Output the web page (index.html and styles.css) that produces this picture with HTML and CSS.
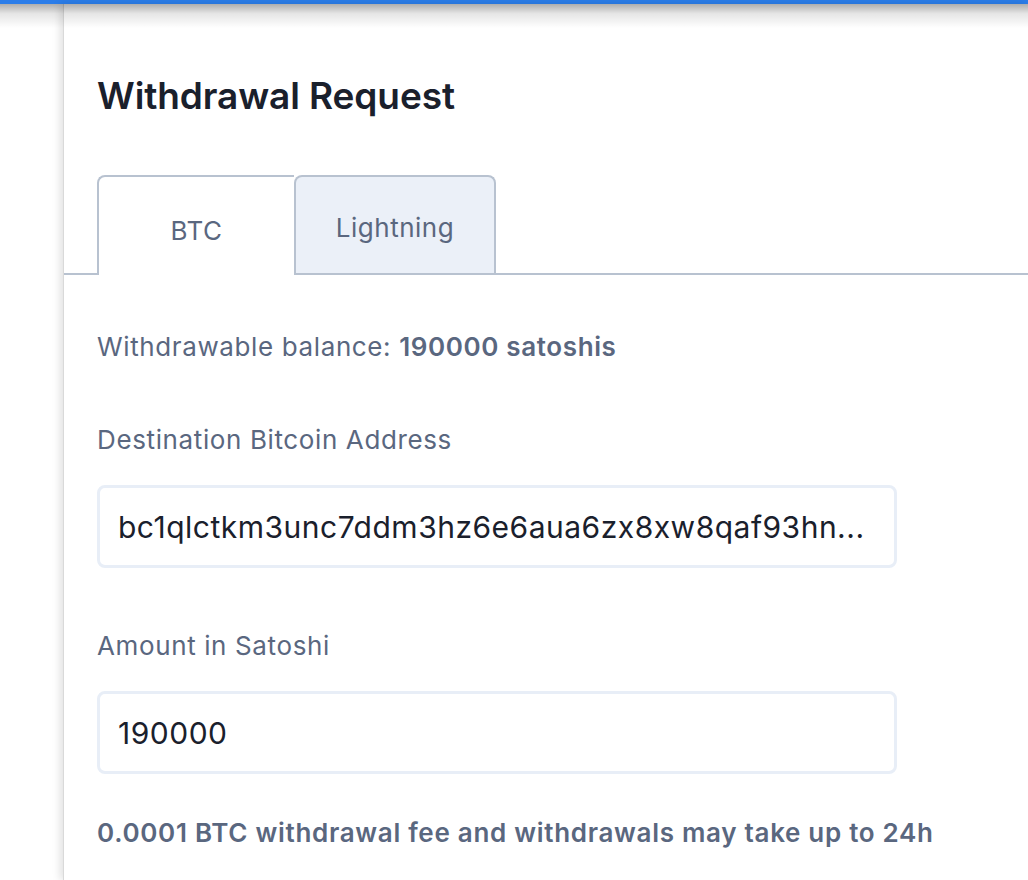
FILE: index.html
```html
<!DOCTYPE html>
<html lang="en">
<head>
<meta charset="utf-8">
<title>Withdrawal Request</title>
<link rel="stylesheet" href="styles.css">
</head>
<body>
<div class="topbar"></div>
<div class="top-shadow"></div>
<div class="layout">
  <aside class="sidebar"></aside>
  <main class="main">
    <h1 class="title">Withdrawal Request</h1>
    <div class="tabs">
      <div class="tab tab-active">BTC</div>
      <div class="tab tab-inactive">Lightning</div>
    </div>
    <div class="panel">
      <p class="balance">Withdrawable balance: <strong>190000 satoshis</strong></p>
      <div class="group">
        <label class="label">Destination Bitcoin Address</label>
        <div class="field">bc1qlctkm3unc7ddm3hz6e6aua6zx8xw8qaf93hn...</div>
      </div>
      <div class="group">
        <label class="label">Amount in Satoshi</label>
        <div class="field">190000</div>
      </div>
      <p class="note">0.0001 BTC withdrawal fee and withdrawals may take up to 24h</p>
    </div>
  </main>
</div>
</body>
</html>
```
FILE: styles.css
```css
* { box-sizing: border-box; }
html, body { margin: 0; padding: 0; background: #ffffff; }
body {
  font-family: Inter, "Noto Sans", Roboto, sans-serif;
  color: #5a677f;
  height: 880px;
  overflow: hidden;
  position: relative;
}
.topbar {
  height: 4px;
  background: #2b7de9;
}
.top-shadow {
  position: absolute;
  left: 0;
  right: 0;
  top: 4px;
  height: 24px;
  background: linear-gradient(to bottom, rgba(0,0,0,0.32), rgba(0,0,0,0.1) 40%, rgba(0,0,0,0));
  z-index: 5;
  pointer-events: none;
}
.layout {
  display: flex;
  height: 876px;
}
.sidebar {
  width: 63px;
  flex: none;
  background: #ffffff;
}
.main {
  flex: 1;
  border-left: 1px solid #d9d9d9;
  box-shadow: -3px 0 8px rgba(0,0,0,0.12);
  background: #ffffff;
  padding-top: 69px;
}
.title {
  margin: 0 0 56px 33px;
  font-size: 37px;
  line-height: 46px;
  font-weight: 600;
  color: #1a202c;
  letter-spacing: -0.1px;
}
.tabs {
  display: flex;
  align-items: flex-start;
  border-bottom: 2px solid #b8c2d0;
  padding-left: 33px;
}
.tab {
  border: 2px solid #b8c2d0;
  border-bottom: none;
  border-radius: 8px 8px 0 0;
  font-size: 26px;
  letter-spacing: 0.5px;
  text-align: center;
  display: flex;
  align-items: center;
  justify-content: center;
  color: #5a677f;
}
.tab-active {
  width: 197px;
  height: 100px;
  margin-bottom: -2px;
  border-right: none;
  border-top-right-radius: 0;
  background: #ffffff;
  padding-top: 8px;
  position: relative;
}
.tab-inactive {
  width: 202px;
  height: 98px;
  background: #ebf0f8;
  padding-top: 4px;
}
.panel {
  padding: 54px 0 0 33px;
}
.balance {
  margin: 0;
  font-size: 26px;
  line-height: 36px;
  letter-spacing: 0.62px;
}
.balance strong { font-weight: 600; }
.group {
  display: flex;
  flex-direction: column;
  gap: 27px;
  margin-top: 57px;
}
.group + .group { margin-top: 60px; }
.label {
  font-size: 26px;
  line-height: 36px;
  letter-spacing: 0.62px;
}
.field {
  width: 800px;
  height: 83px;
  border: 3px solid #e8eef7;
  border-radius: 8px;
  padding: 0 18px;
  display: flex;
  align-items: center;
  font-size: 30px;
  letter-spacing: 0.5px;
  color: #1a202c;
  white-space: nowrap;
  overflow: hidden;
}
.note {
  margin: 41px 0 0;
  font-size: 26px;
  line-height: 36px;
  font-weight: 600;
  letter-spacing: 0.7px;
}
```
